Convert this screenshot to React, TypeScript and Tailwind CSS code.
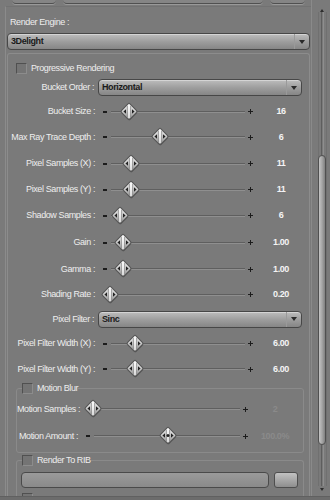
import React from 'react'

function Thumb({ dot }: { dot?: boolean }) {
  return (
    <svg width="20" height="20" viewBox="0 0 20 20">
      <defs>
        <linearGradient id="tg" x1="0" y1="0" x2="0" y2="1">
          <stop offset="0" stopColor="#f4f4f4" />
          <stop offset="0.45" stopColor="#d0d0d0" />
          <stop offset="1" stopColor="#8a8a8a" />
        </linearGradient>
      </defs>
      <path
        d="M10.6 2.6 L18 10 Q18.6 10.6 18 11.2 L11.2 18 Q10.6 18.6 10 18 L2.6 10.6 Z"
        fill="#3a3a3a"
        opacity="0.5"
      />
      <path
        d="M10 1.3 Q10.5 1.3 11 1.8 L17.6 8.6 Q18.3 9.5 17.6 10.4 L11 17.2 Q10 18.1 9 17.2 L2.4 10.4 Q1.7 9.5 2.4 8.6 L9 1.8 Q9.5 1.3 10 1.3 Z"
        fill="url(#tg)"
        stroke="#555555"
        strokeWidth="1.1"
      />
      <path d="M8.3 3.8 V15.2 M11.7 3.8 V15.2" stroke="#8e8e8e" strokeWidth="0.9" />
      <path d="M10 3 V16" stroke="#ffffff" strokeWidth="1.3" />
      <path d="M4.4 9.5 L7 7.2 L7 11.8 Z" fill="#222222" />
      <path d="M15.6 9.5 L13 7.2 L13 11.8 Z" fill="#222222" />
      {dot && <circle cx="10" cy="9.5" r="1.5" fill="#222222" />}
    </svg>
  )
}

function Minus() {
  return <span className="block h-[2px] w-[4px] bg-[#1c1c1c]" />
}

function Plus() {
  return (
    <span className="relative block h-[5px] w-[5px]">
      <span className="absolute left-0 top-[2px] h-[1px] w-[5px] bg-[#1c1c1c]" />
      <span className="absolute left-[2px] top-0 h-[5px] w-[1px] bg-[#1c1c1c]" />
    </span>
  )
}

function Slider({ x, dot, noMinus }: { x: number; dot?: boolean; noMinus?: boolean }) {
  return (
    <div className="relative flex h-full flex-1 items-center">
      <span className="flex w-[12px] justify-center">{!noMinus && <Minus />}</span>
      <span className="h-[2px] flex-1 border-t border-b border-t-[#5f5f5f] border-b-[#8f8f8f]" />
      <span className="flex w-[10px] justify-center">
        <Plus />
      </span>
      <span className="absolute top-1/2 -translate-x-1/2 -translate-y-1/2" style={{ left: x }}>
        <Thumb dot={dot} />
      </span>
    </div>
  )
}

function Label({ children, w }: { children: React.ReactNode; w: string }) {
  return <div className={`${w} shrink-0 whitespace-nowrap pr-[4px] text-right text-[#eeeeee]`}>{children}</div>
}

function SliderRow({ label, x, value, h }: { label: string; x: number; value: string; h: string }) {
  return (
    <div className={`flex ${h} items-center`}>
      <Label w="w-[91px]">{label}</Label>
      <div className="flex h-full w-[156px]">
        <Slider x={x} />
      </div>
      <div className="w-[52px] text-center font-bold text-[#f4f4f4]">{value}</div>
    </div>
  )
}

function Dropdown({ value, className }: { value: string; className: string }) {
  return (
    <div
      className={`flex h-[17px] items-center rounded-[4px] border border-[#474747] bg-gradient-to-b from-[#bdbdbd] via-[#9e9e9e] to-[#868686] shadow-[inset_0_1px_0_#d4d4d4] ${className}`}
    >
      <span className="flex-1 pl-[3px] font-bold text-[#1a1a1a]">{value}</span>
      <span className="flex h-full w-[15px] items-center justify-center border-l border-l-[#9a9a9a]">
        <span className="h-0 w-0 border-x-[3px] border-t-[4px] border-x-transparent border-t-[#2a2a2a]" />
      </span>
    </div>
  )
}

function Check() {
  return (
    <span className="block h-[11px] w-[11px] border border-t-[#505050] border-l-[#505050] border-b-[#8c8c8c] border-r-[#8c8c8c] bg-[#747474]" />
  )
}

function ScrollBar() {
  return (
    <div className="flex w-[19px] shrink-0 flex-col items-center border-l border-l-[#8a8a8a] pl-[2px]">
      <div className="flex h-[12px] items-end justify-center">
        <span className="h-0 w-0 border-x-[2px] border-b-[3px] border-x-transparent border-b-[#2e2e2e]" />
      </div>
      <div className="flex w-[9px] flex-1 flex-col items-center border-x border-x-[#707070]">
        <div className="h-[143px] w-[3px] border-x border-l-[#5e5e5e] border-r-[#8e8e8e]" />
        <div className="h-[290px] w-[8px] rounded-full border border-[#505050] bg-gradient-to-r from-[#c4c4c4] via-[#a6a6a6] to-[#808080]" />
        <div className="w-[3px] flex-1 border-x border-l-[#5e5e5e] border-r-[#8e8e8e]" />
      </div>
      <div className="flex h-[10px] items-start justify-center pt-[2px]">
        <span className="h-0 w-0 border-x-[2px] border-t-[3px] border-x-transparent border-t-[#2e2e2e]" />
      </div>
    </div>
  )
}

export default function App() {
  return (
    <div className="flex h-[500px] w-[330px] flex-col overflow-hidden bg-[#7a7a7a] font-['Liberation_Sans',Arial,sans-serif] text-[9px] leading-none tracking-[-0.4px]">
      <div className="flex h-[496px] overflow-hidden">
        {/* main column */}
        <div className="flex w-[311px] shrink-0 flex-col">
          {/* cut-off tab buttons */}
          <div className="flex h-[6px] shrink-0 items-start">
            <span className="ml-[12px] h-[4px] w-[44px] rounded-b-[4px] border-b border-b-[#505050] bg-[#858585] shadow-[0_1px_0_#999999]" />
            <span className="ml-[7px] h-[4px] w-[200px] rounded-b-[4px] border-b border-b-[#505050] bg-[#858585] shadow-[0_1px_0_#999999]" />
            <span className="ml-[7px] h-[4px] w-[35px] rounded-b-[4px] border-b border-b-[#505050] bg-[#858585] shadow-[0_1px_0_#999999]" />
          </div>
          <div className="ml-[5px] flex flex-1 flex-col border-l border-t border-l-[#8b8b8b] border-t-[#727272] pl-[1px] pt-[4px]">
            <div className="flex h-[22px] items-center pl-[3px] text-[#eeeeee]">Render Engine :</div>
            <Dropdown value="3Delight" className="w-[303px]" />
            <div className="mt-[3px] flex w-[303px] flex-1 flex-col rounded-t-[3px] border border-b-0 border-[#8c8c8c]">
              <div className="mt-[6px] flex h-[16px] items-center pl-[8px]">
                <Check />
                <span className="ml-[4px] text-[#eeeeee]">Progressive Rendering</span>
              </div>
              <div className="flex h-[23px] items-center">
                <Label w="w-[90px]">Bucket Order :</Label>
                <Dropdown value="Horizontal" className="w-[204px]" />
              </div>
              <SliderRow label="Bucket Size :" x={30} value="16" h="h-[25px]" />
              <SliderRow label="Max Ray Trace Depth :" x={61} value="6" h="h-[26px]" />
              <SliderRow label="Pixel Samples (X) :" x={32} value="11" h="h-[27px]" />
              <SliderRow label="Pixel Samples (Y) :" x={32} value="11" h="h-[25px]" />
              <SliderRow label="Shadow Samples :" x={21} value="6" h="h-[27px]" />
              <SliderRow label="Gain :" x={24} value="1.00" h="h-[27px]" />
              <SliderRow label="Gamma :" x={24} value="1.00" h="h-[26px]" />
              <SliderRow label="Shading Rate :" x={11} value="0.20" h="h-[25px]" />
              <div className="flex h-[24px] items-center">
                <Label w="w-[90px]">Pixel Filter :</Label>
                <Dropdown value="Sinc" className="w-[204px]" />
              </div>
              <SliderRow label="Pixel Filter Width (X) :" x={36} value="6.00" h="h-[25px]" />
              <SliderRow label="Pixel Filter Width (Y) :" x={36} value="6.00" h="h-[26px]" />

              {/* Motion blur group */}
              <fieldset className="ml-[8px] w-[288px] rounded-[3px] border border-[#8a8a8a] pb-[2px]">
                <legend className="ml-[5px] flex h-[12px] items-center">
                  <Check />
                  <span className="ml-[4px] text-[#eeeeee]">Motion Blur</span>
                </legend>
                <div className="mt-[2px] flex h-[26px] items-center">
                  <Label w="w-[65px]">Motion Samples :</Label>
                  <div className="flex h-full w-[168px]">
                    <Slider x={11} noMinus />
                  </div>
                  <div className="w-[50px] text-center font-bold text-[#8a8a8a]">2</div>
                </div>
                <div className="flex h-[28px] items-center">
                  <Label w="w-[65px]">Motion Amount :</Label>
                  <div className="flex h-full w-[168px]">
                    <Slider x={86} dot />
                  </div>
                  <div className="w-[50px] text-center font-bold text-[#8a8a8a]">100.0%</div>
                </div>
              </fieldset>

              {/* Render to RIB group */}
              <fieldset className="ml-[8px] mt-[1px] w-[288px] rounded-t-[3px] border border-b-0 border-[#8a8a8a]">
                <legend className="ml-[5px] flex h-[12px] items-center">
                  <Check />
                  <span className="ml-[4px] text-[#eeeeee]">Render To RIB</span>
                </legend>
                <div className="mt-[6px] flex items-center pl-[4px]">
                  <div className="h-[16px] w-[248px] rounded-[4px] border border-[#4a4a4a] bg-gradient-to-b from-[#9a9a9a] to-[#8a8a8a]" />
                  <div className="ml-[5px] h-[16px] w-[24px] rounded-[3px] border border-[#4e4e4e] bg-gradient-to-b from-[#c2c2c2] to-[#8e8e8e]" />
                </div>
                <div className="mt-[5px] pl-[5px]">
                  <Check />
                </div>
              </fieldset>
            </div>
          </div>
        </div>
        <ScrollBar />
      </div>
      <div className="h-[4px] shrink-0 border-t border-t-[#606060] bg-[#6c6c6c]" />
    </div>
  )
}
